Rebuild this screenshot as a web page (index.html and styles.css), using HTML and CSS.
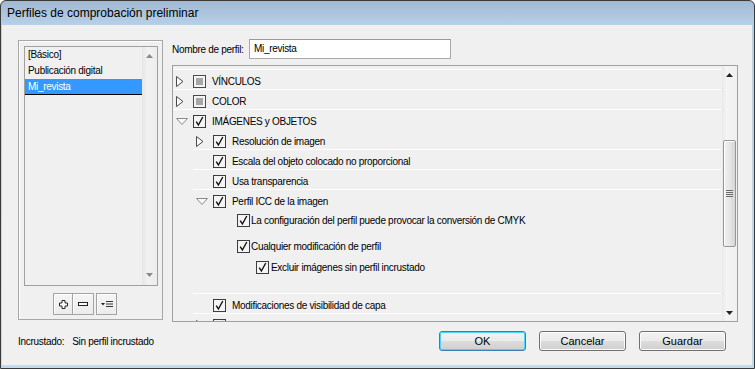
FILE: index.html
```html
<!DOCTYPE html>
<html lang="es">
<head>
<meta charset="utf-8">
<title>Perfiles de comprobación preliminar</title>
<link rel="stylesheet" href="styles.css">
</head>
<body>
<div class="window">
  <div class="titlebar">Perfiles de comprobación preliminar</div>
  <div class="client">
    <div class="main">
      <div class="group">
        <div class="list">
          <div class="items">
            <div class="item">[Básico]</div>
            <div class="item">Publicación digital</div>
            <div class="item sel">Mi_revista</div>
          </div>
          <div class="lscroll">
            <svg class="arrow" width="7" height="4" viewBox="0 0 7 4"><path d="M0 4 L3.5 0 L7 4 Z" fill="#8a8a8a"/></svg>
            <svg class="arrow" width="7" height="4" viewBox="0 0 7 4"><path d="M0 0 L7 0 L3.5 4 Z" fill="#8a8a8a"/></svg>
          </div>
        </div>
        <div class="tools">
          <span class="tb first"><svg width="9" height="9" viewBox="0 0 9 9"><path d="M3 0.5 H6 V3 H8.5 V6 H6 V8.5 H3 V6 H0.5 V3 H3 Z" fill="#fff" stroke="#222"/></svg></span>
          <span class="tb second"><svg width="10" height="4" viewBox="0 0 10 4"><rect x="0.5" y="0.5" width="9" height="3" fill="#fff" stroke="#222"/></svg></span>
          <span class="tb third"><svg width="12" height="8" viewBox="0 0 12 8"><path d="M0 3 L4 3 L2 5.5 Z" fill="#222"/><path d="M5 1.5 H12 M5 4 H12 M5 6.5 H12" stroke="#333" stroke-width="1"/></svg></span>
        </div>
      </div>
      <div class="right">
        <div class="namerow">
          <span class="label">Nombre de perfil:</span>
          <div class="input">Mi_revista</div>
        </div>
        <div class="tree">
          <div class="rows">
            <div class="row top">
              <span class="tw"><svg width="8" height="11" viewBox="0 0 8 11"><path d="M0.5 0.5 L7 5.5 L0.5 10.5 Z" fill="#fafafa" stroke="#4a4a4a"/></svg></span>
              <svg class="cb" width="13" height="13" viewBox="0 0 13 13"><rect x="0.5" y="0.5" width="12" height="12" fill="#f4f4f4" stroke="#4a4a4a"/><rect x="3" y="3" width="7" height="7" fill="#a6a6a6"/></svg>
              <span class="txt caps">VÍNCULOS</span>
            </div>
            <div class="row top">
              <span class="tw"><svg width="8" height="11" viewBox="0 0 8 11"><path d="M0.5 0.5 L7 5.5 L0.5 10.5 Z" fill="#fafafa" stroke="#4a4a4a"/></svg></span>
              <svg class="cb" width="13" height="13" viewBox="0 0 13 13"><rect x="0.5" y="0.5" width="12" height="12" fill="#f4f4f4" stroke="#4a4a4a"/><rect x="3" y="3" width="7" height="7" fill="#a6a6a6"/></svg>
              <span class="txt caps">COLOR</span>
            </div>
            <div class="row top">
              <span class="tw"><svg width="12" height="7" viewBox="0 0 12 7"><path d="M0.5 0.5 L11.5 0.5 L6 6.5 Z" fill="#f8f8f8" stroke="#8a8a8a"/></svg></span>
              <svg class="cb" width="13" height="13" viewBox="0 0 13 13"><rect x="0.5" y="0.5" width="12" height="12" fill="#f4f4f4" stroke="#3c3c3c"/><path d="M3.2 6.6 L5.4 10 L9.8 2" fill="none" stroke="#111" stroke-width="1.4"/></svg>
              <span class="txt caps">IMÁGENES y OBJETOS</span>
            </div>
            <div class="row sub first">
              <span class="tw"><svg width="8" height="11" viewBox="0 0 8 11"><path d="M0.5 0.5 L7 5.5 L0.5 10.5 Z" fill="#fafafa" stroke="#4a4a4a"/></svg></span>
              <svg class="cb" width="13" height="13" viewBox="0 0 13 13"><rect x="0.5" y="0.5" width="12" height="12" fill="#f4f4f4" stroke="#3c3c3c"/><path d="M3.2 6.6 L5.4 10 L9.8 2" fill="none" stroke="#111" stroke-width="1.4"/></svg>
              <span class="txt">Resolución de imagen</span>
            </div>
            <div class="row sub">
              <span class="tw"></span>
              <svg class="cb" width="13" height="13" viewBox="0 0 13 13"><rect x="0.5" y="0.5" width="12" height="12" fill="#f4f4f4" stroke="#3c3c3c"/><path d="M3.2 6.6 L5.4 10 L9.8 2" fill="none" stroke="#111" stroke-width="1.4"/></svg>
              <span class="txt">Escala del objeto colocado no proporcional</span>
            </div>
            <div class="row sub">
              <span class="tw"></span>
              <svg class="cb" width="13" height="13" viewBox="0 0 13 13"><rect x="0.5" y="0.5" width="12" height="12" fill="#f4f4f4" stroke="#3c3c3c"/><path d="M3.2 6.6 L5.4 10 L9.8 2" fill="none" stroke="#111" stroke-width="1.4"/></svg>
              <span class="txt">Usa transparencia</span>
            </div>
            <div class="row sub">
              <span class="tw"><svg width="12" height="7" viewBox="0 0 12 7"><path d="M0.5 0.5 L11.5 0.5 L6 6.5 Z" fill="#f8f8f8" stroke="#8a8a8a"/></svg></span>
              <svg class="cb" width="13" height="13" viewBox="0 0 13 13"><rect x="0.5" y="0.5" width="12" height="12" fill="#f4f4f4" stroke="#3c3c3c"/><path d="M3.2 6.6 L5.4 10 L9.8 2" fill="none" stroke="#111" stroke-width="1.4"/></svg>
              <span class="txt">Perfil ICC de la imagen</span>
            </div>
            <div class="nested">
              <div class="opt lv2">
                <svg class="cb" width="13" height="13" viewBox="0 0 13 13"><rect x="0.5" y="0.5" width="12" height="12" fill="#f4f4f4" stroke="#3c3c3c"/><path d="M3.2 6.6 L5.4 10 L9.8 2" fill="none" stroke="#111" stroke-width="1.4"/></svg>
                <span class="txt">La configuración del perfil puede provocar la conversión de CMYK</span>
              </div>
              <div class="opt lv2 gap">
                <svg class="cb" width="13" height="13" viewBox="0 0 13 13"><rect x="0.5" y="0.5" width="12" height="12" fill="#f4f4f4" stroke="#3c3c3c"/><path d="M3.2 6.6 L5.4 10 L9.8 2" fill="none" stroke="#111" stroke-width="1.4"/></svg>
                <span class="txt">Cualquier modificación de perfil</span>
              </div>
              <div class="opt lv3">
                <svg class="cb" width="13" height="13" viewBox="0 0 13 13"><rect x="0.5" y="0.5" width="12" height="12" fill="#f4f4f4" stroke="#3c3c3c"/><path d="M3.2 6.6 L5.4 10 L9.8 2" fill="none" stroke="#111" stroke-width="1.4"/></svg>
                <span class="txt">Excluir imágenes sin perfil incrustado</span>
              </div>
            </div>
            <div class="row sub">
              <span class="tw"></span>
              <svg class="cb" width="13" height="13" viewBox="0 0 13 13"><rect x="0.5" y="0.5" width="12" height="12" fill="#f4f4f4" stroke="#3c3c3c"/><path d="M3.2 6.6 L5.4 10 L9.8 2" fill="none" stroke="#111" stroke-width="1.4"/></svg>
              <span class="txt">Modificaciones de visibilidad de capa</span>
            </div>
            <div class="row sub">
              <span class="tw"><svg width="8" height="11" viewBox="0 0 8 11"><path d="M0.5 0.5 L7 5.5 L0.5 10.5 Z" fill="#fafafa" stroke="#4a4a4a"/></svg></span>
              <svg class="cb" width="13" height="13" viewBox="0 0 13 13"><rect x="0.5" y="0.5" width="12" height="12" fill="#f4f4f4" stroke="#3c3c3c"/><path d="M3.2 6.6 L5.4 10 L9.8 2" fill="none" stroke="#111" stroke-width="1.4"/></svg>
            </div>
          </div>
          <div class="vscroll">
            <div class="sbtn"><svg width="7" height="4" viewBox="0 0 7 4"><path d="M0 4 L3.5 0 L7 4 Z" fill="#222"/></svg></div>
            <div class="spacer-top"></div>
            <div class="thumb">
              <svg width="7" height="7" viewBox="0 0 7 7"><path d="M0 0.5 H7 M0 2.5 H7 M0 4.5 H7 M0 6.5 H7" stroke="#6a6a6a"/></svg>
            </div>
            <div class="spacer"></div>
            <div class="sbtn"><svg width="7" height="4" viewBox="0 0 7 4"><path d="M0 0 L7 0 L3.5 4 Z" fill="#222"/></svg></div>
          </div>
        </div>
      </div>
    </div>
    <div class="footer">
      <div class="embed"><span>Incrustado:</span><span class="val">Sin perfil incrustado</span></div>
      <div class="buttons">
        <button class="btn default">OK</button>
        <button class="btn">Cancelar</button>
        <button class="btn">Guardar</button>
      </div>
    </div>
  </div>
</div>
</body>
</html>
```

FILE: styles.css
```css
* { box-sizing: border-box; }
html, body { margin: 0; padding: 0; }
body {
  width: 755px;
  height: 369px;
  overflow: hidden;
  background: #ffffff;
  font-family: "Liberation Sans", Arial, sans-serif;
  font-size: 10px;
  letter-spacing: -0.3px;
  color: #000;
}
.window {
  width: 755px;
  height: 369px;
  border: 1px solid #3a3a3a;
  border-radius: 6px 6px 0 0;
  background: linear-gradient(#a2b9d3 0px, #b8cfe8 24px, #c3d9ef 100%);
  display: flex;
  flex-direction: column;
}
.titlebar {
  height: 24px;
  line-height: 25px;
  padding-left: 6px;
  font-size: 12px;
  letter-spacing: 0;
  color: #000;
  flex: none;
}
.client {
  flex: 1;
  margin: 0 2px 3px 1px;
  background: #f0f0f0;
  display: flex;
  flex-direction: column;
}
.main {
  display: flex;
  padding: 14px 0 0 16px;
}
.group {
  margin-top: 1px;
  width: 145px;
  height: 280px;
  border: 1px solid #a7a7a7;
  box-shadow: inset 1px 1px 0 #fdfdfd;
  padding: 5px;
}
.list {
  width: 134px;
  height: 240px;
  border: 1px solid #a0a0a0;
  display: flex;
  background: #f0f0f0;
}
.items { flex: 1; }
.item {
  height: 16px;
  line-height: 16px;
  padding-left: 3px;
  white-space: nowrap;
}
.item.sel {
  background: #3399ff;
  color: #fff;
  border-bottom: 1px solid #000;
  line-height: 15px;
}
.lscroll {
  width: 15px;
  background: linear-gradient(to right, #e6e6e6, #f2f2f2 40%, #ececec);
  display: flex;
  flex-direction: column;
  align-items: center;
  justify-content: space-between;
  padding: 7px 0 8px;
}
.arrow { display: block; }
.tools {
  display: flex;
  margin: 7px 0 0 29px;
}
.tb {
  height: 22px;
  border: 1px solid #a3a3a3;
  background: linear-gradient(#f5f5f5, #ececec);
  box-shadow: inset 1px 1px 0 #fff;
  display: flex;
  align-items: center;
  justify-content: center;
}
.tb.first { width: 20px; }
.tb.second { width: 21px; border-left: none; }
.tb.third { width: 21px; margin-left: 2px; }
.right {
  margin-left: 9px;
  width: 566px;
}
.namerow {
  display: flex;
  align-items: center;
  height: 20px;
}
.label { width: 77px; white-space: nowrap; }
.input {
  width: 202px;
  height: 20px;
  border: 1px solid #a9a9a9;
  border-top-color: #9a9a9a;
  background: #fff;
  padding-left: 4px;
  line-height: 17px;
}
.tree {
  margin-top: 6px;
  width: 566px;
  height: 257px;
  border: 1px solid #a0a0a0;
  display: flex;
  overflow: hidden;
}
.rows {
  flex: 1;
  overflow: hidden;
  padding-top: 3px;
}
.row {
  height: 20px;
  padding-top: 4px;
  border-top: 1px solid #fff;
  margin-right: 1px;
  display: flex;
  align-items: center;
  white-space: nowrap;
}
.row.sub { margin-left: 20px; }
.row.sub.first { border-top-color: transparent; }
.tw {
  width: 20px;
  height: 13px;
  flex: none;
  display: flex;
  align-items: center;
  padding-left: 3px;
}
.tw svg { display: block; }
.cb { display: block; flex: none; }
.txt { margin-left: 6px; white-space: nowrap; }
.nested {
  height: 84px;
  padding-top: 5px;
}
.opt {
  display: flex;
  align-items: center;
  height: 13px;
  white-space: nowrap;
}
.opt .txt { margin-left: 1px; }
.opt.lv2 { padding-left: 64px; }
.opt.lv2.gap { margin-top: 13px; }
.opt.lv3 { padding-left: 83px; margin-top: 8px; }
.opt.lv3 .txt { margin-left: 2px; }
.vscroll {
  width: 15px;
  flex: none;
  background: linear-gradient(to right, #e9e9e9, #f4f4f4 30%, #f0f0f0);
  display: flex;
  flex-direction: column;
  align-items: center;
}
.sbtn {
  height: 17px;
  width: 15px;
  display: flex;
  align-items: center;
  justify-content: center;
  flex: none;
}
.spacer-top { height: 57px; flex: none; }
.spacer { flex: 1; }
.thumb {
  width: 13px;
  height: 107px;
  flex: none;
  border: 1px solid #979797;
  border-radius: 2px;
  background: linear-gradient(to right, #f2f2f2, #e6e6e6 50%, #d6d6d6);
  box-shadow: inset 1px 1px 0 #fff;
  display: flex;
  align-items: center;
  justify-content: center;
}
.footer {
  display: flex;
  align-items: center;
  margin-top: 9px;
  padding: 0 26px 0 16px;
  height: 20px;
}
.embed { display: flex; white-space: nowrap; }
.embed .val { margin-left: 8px; }
.buttons {
  margin-left: auto;
  display: flex;
  gap: 13px;
}
.btn {
  width: 87px;
  height: 20px;
  padding: 0;
  border: 1px solid #707070;
  border-radius: 3px;
  background: linear-gradient(#f2f2f2 0%, #ebebeb 50%, #dddddd 51%, #cfcfcf 100%);
  box-shadow: inset 0 0 0 1px #fcfcfc;
  font-family: "Liberation Sans", Arial, sans-serif;
  font-size: 11px;
  letter-spacing: 0;
  color: #000;
  line-height: 17px;
}
.btn.default {
  border-color: #3c7fb1;
  box-shadow: inset 0 0 0 1px #48d7fb;
}
```
